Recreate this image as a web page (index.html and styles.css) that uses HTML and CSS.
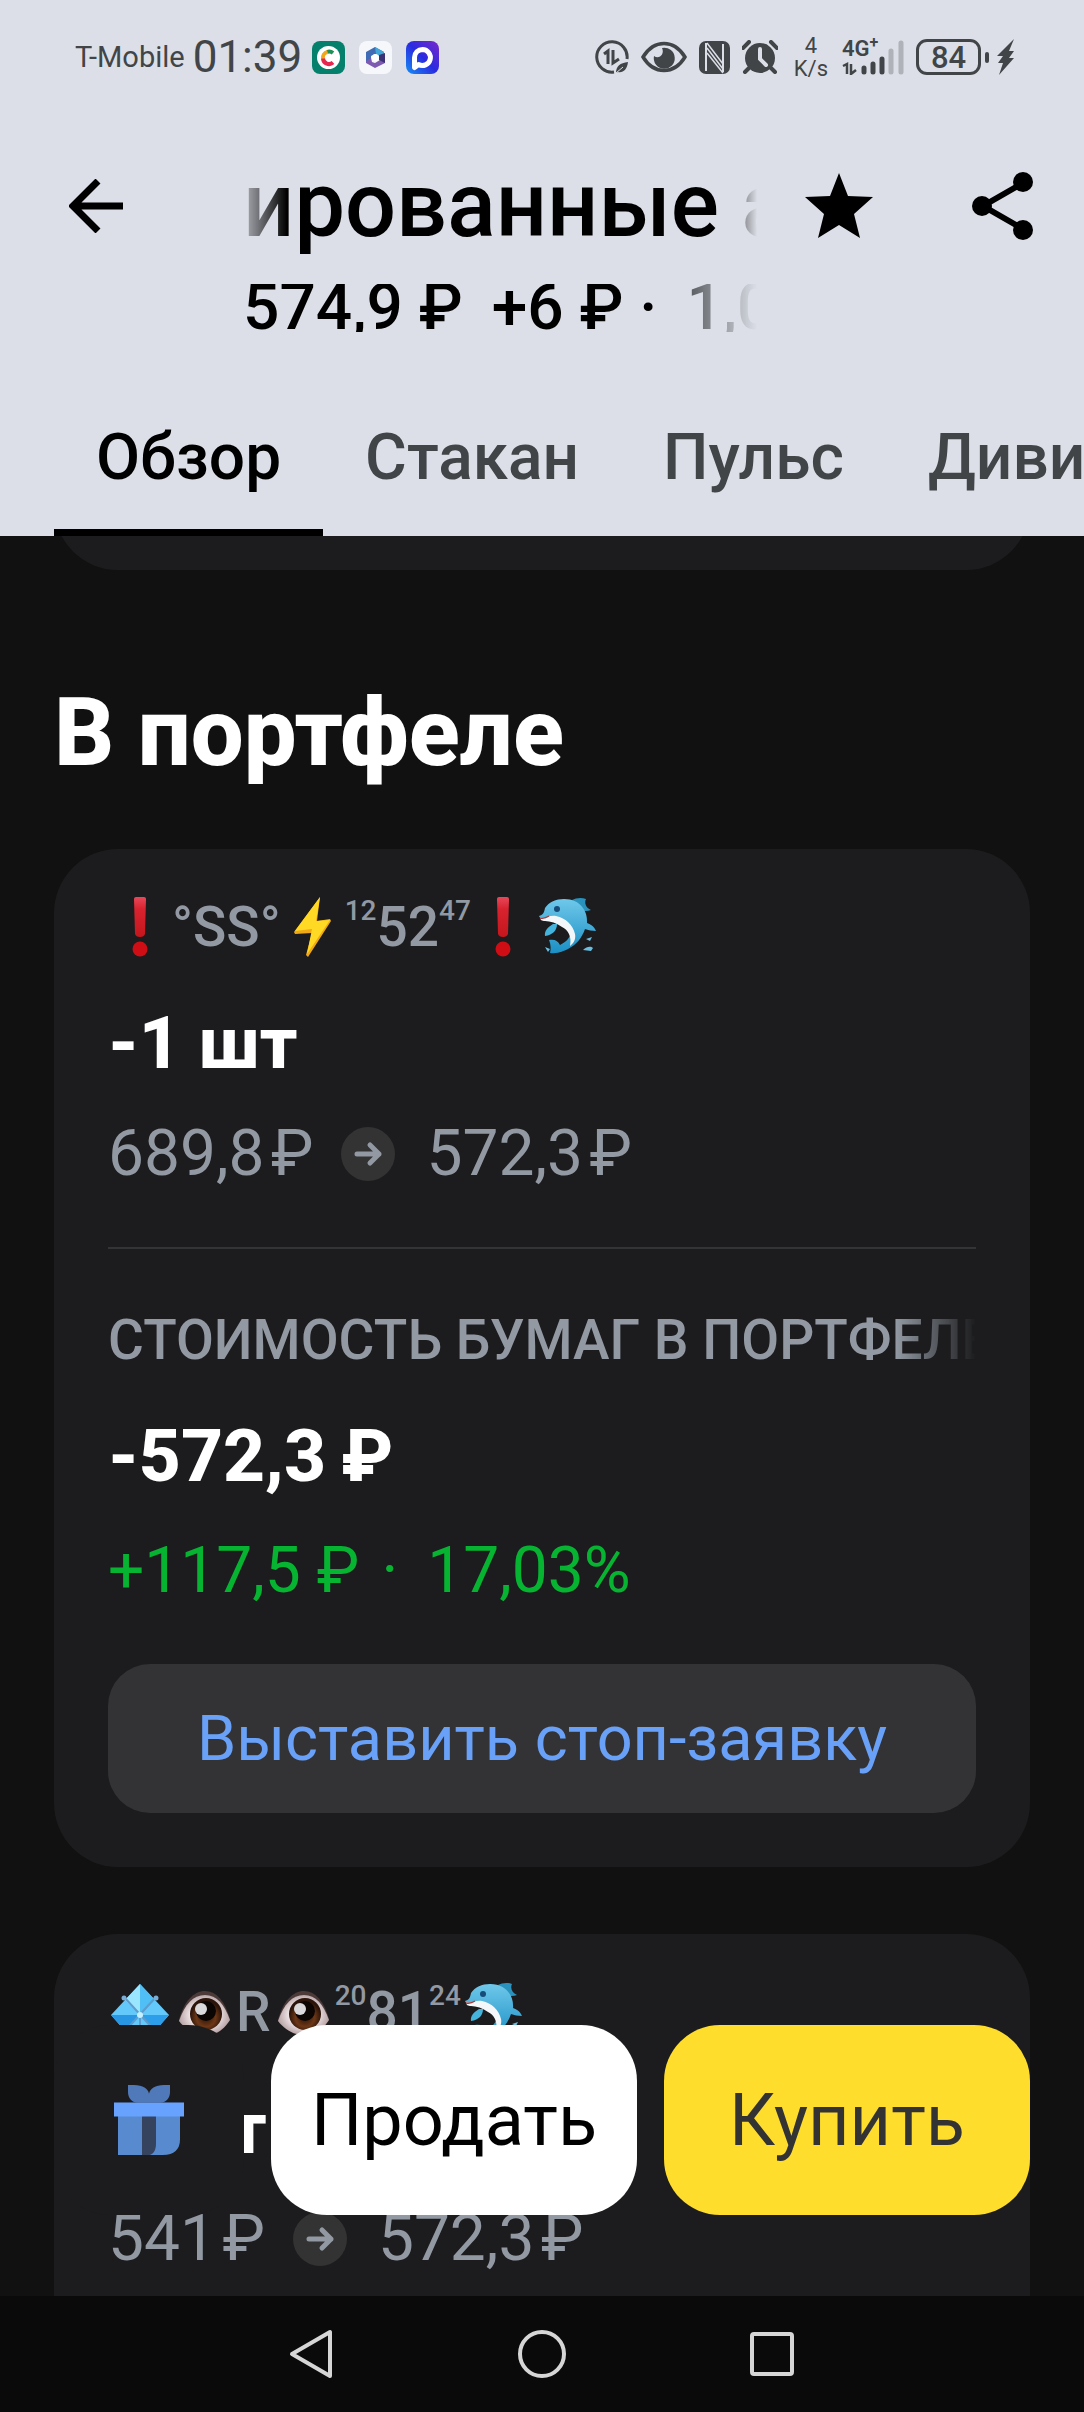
FILE: index.html
```html
<!DOCTYPE html>
<html lang="ru">
<head>
<meta charset="UTF-8">
<meta name="viewport" content="width=device-width, initial-scale=1.0">
<title>Обзор</title>
<link rel="stylesheet" href="styles.css">
</head>
<body>

<!-- Shared emoji drawings -->
<svg width="0" height="0" class="defs" aria-hidden="true">
  <defs>
    <linearGradient id="blue" x1="0" y1="0" x2="0" y2="1">
      <stop offset="0" stop-color="#6fc8ea"/>
      <stop offset="1" stop-color="#1b8fc4"/>
    </linearGradient>
    <linearGradient id="red" x1="0" y1="0" x2="0" y2="1">
      <stop offset="0" stop-color="#e8485a"/>
      <stop offset="0.3" stop-color="#d8232f"/>
      <stop offset="1" stop-color="#c4161c"/>
    </linearGradient>
    <linearGradient id="app" x1="0" y1="1" x2="1" y2="0">
      <stop offset="0" stop-color="#1590f5"/>
      <stop offset="0.5" stop-color="#2a2be0"/>
      <stop offset="1" stop-color="#7a28c8"/>
    </linearGradient>
    <radialGradient id="white-eye">
      <stop offset="0.5" stop-color="#f7eef0"/>
      <stop offset="1" stop-color="#b9a5a8"/>
    </radialGradient>
    <radialGradient id="iris" cx="0.5" cy="0.6" r="0.5">
      <stop offset="0" stop-color="#2a1208"/>
      <stop offset="0.6" stop-color="#6d3716"/>
      <stop offset="1" stop-color="#2b1409"/>
    </radialGradient>
    <symbol id="exclaim" viewBox="0 0 60 60">
      <path d="M24 2q0-2 2-2h8q2 0 2 2l-1 35q-1 3-5 3t-5-3z" fill="url(#red)"/>
      <circle cx="30" cy="52" r="7.5" fill="#cf0d14"/>
    </symbol>
    <symbol id="bolt" viewBox="0 0 60 60">
      <path d="M37 0L11 35l1 2 17-1-6 22 2 2 23-36-1-2-13 2z" fill="#f0a818"/>
      <path d="M37 0L12 34l17-2-5 25 23-34-14 1z" fill="#ffd923"/>
    </symbol>
    <symbol id="dolphin" viewBox="0 0 60 60">
      <path d="M35 3c4-2 9-3 14-1-2 4 0 9 5 11-5 2-12 1-16-3z" fill="#2a93bd"/>
      <path d="M2 19c4-1 5-3 6-8C12 5 19 2 27 2c17 0 24 13 23 24 3 1 7 3 9 8-4 0-8-1-11-2-3 9-9 16-17 20-5 2-9 5-18 4 1-4 1-8-1-13 6-1 9 1 11 5 6-3 10-7 11-13-4-8-12-13-23-13-4 0-8 0-9-3z" fill="url(#blue)"/>
      <path d="M3 20c5 2 9-2 16-1 10 2 17 9 19 18 1 5-1 9-5 12 2-10-2-16-8-19-5-4-12-6-17-6-3 0-5-1-5-4z" fill="#f4f7fa"/>
      <path d="M3 21c4 1 6 0 9-2" fill="none" stroke="#a63d3d" stroke-width="1.5"/>
      <path d="M20 27c0 6-4 11-12 12-1-5 3-9 8-12z" fill="#45b4dd"/>
      <circle cx="20" cy="12" r="3" fill="#174b78"/>
      <path d="M49 42l6-2-2 4zM46 53c4-4 8-4 10-2l-2 3zM8 50l5 2-2 3z" fill="#6cbede"/>
    </symbol>
    <symbol id="gem" viewBox="0 0 60 60">
      <path d="M30 2L45 18 59 33 45 49H15L1 33 15 18z" fill="#63c9fb"/>
      <path d="M30 2v31L15 18z" fill="#9be6ff"/>
      <path d="M30 2v31l15-15z" fill="#4fbff6"/>
      <path d="M1 33h29L15 49z" fill="#2996e4"/>
      <path d="M59 33H30l15 16z" fill="#2d9fea"/>
      <path d="M15 16l30 33M45 16L15 49M30 33v16" stroke="#5e9ccd" stroke-width="2" fill="none"/>
      <circle cx="14" cy="16" r="2.5" fill="#7aaed6"/><circle cx="46" cy="16" r="2.5" fill="#7aaed6"/>
      <circle cx="30" cy="33" r="3" fill="#c4f0ff"/>
    </symbol>
    <symbol id="eye" viewBox="0 0 60 60">
      <path d="M5 38C10 19 20 9 31 9s20 10 25 28C49 49 41 54 31 54S12 47 5 38z" fill="#4c3a38"/>
      <path d="M5 39C11 22 19 13 31 13s19 9 25 25C49 49 41 53 31 53S12 48 5 39z" fill="url(#white-eye)"/>
      <circle cx="32" cy="32" r="16" fill="url(#iris)"/>
      <circle cx="32" cy="29" r="10" fill="#0b0504"/>
      <circle cx="27" cy="27" r="6" fill="#d9d9dc"/>
    </symbol>
    <symbol id="go" viewBox="0 0 54 54">
      <circle cx="27" cy="27" r="27" fill="#333333"/>
      <path d="M16 27h22M29 18l9 9-9 9" fill="none" stroke="#9299a2" stroke-width="5" stroke-linecap="round" stroke-linejoin="round"/>
    </symbol>
  </defs>
</svg>

<div class="app">
  <header class="header">
    <div class="status">
      <span class="carrier">T-Mobile</span>
      <span class="clock">01:39</span>
      <div class="apps">
        <svg width="33" height="33" viewBox="0 0 33 33">
          <rect width="33" height="33" rx="8" fill="#04806c"/>
          <circle cx="16.500" cy="16.500" r="11.500" fill="#fff"/>
          <path d="M21 12a6 6 0 0 0-6-1" fill="none" stroke="#1d8f57" stroke-width="4"/>
          <path d="M15.500 11A6 6 0 0 0 11 18" fill="none" stroke="#f2a71b" stroke-width="4"/>
          <path d="M11 17.500a6 6 0 0 0 10 4" fill="none" stroke="#e5264f" stroke-width="4"/>
        </svg>
        <svg width="33" height="33" viewBox="0 0 33 33">
          <rect width="33" height="33" rx="8" fill="#f6f7fa"/>
          <path d="M16 6l9 5v6l-9-4-4 2v8l-5-3v-9z" fill="#3f6cb4"/>
          <path d="M16 6l9 5v6l-8-4z" fill="#41a6d8"/>
          <path d="M26 17v5l-10 5-9-5v-2l5-3 1 4 3 1 5-3z" fill="#7e5bb0"/>
          <path d="M26 12v10l-6-3v-5z" fill="#3b3275"/>
          <circle cx="16.500" cy="16.500" r="3.500" fill="#fff"/>
        </svg>
        <svg width="33" height="33" viewBox="0 0 33 33">
          <rect width="33" height="33" rx="8" fill="url(#app)"/>
          <path d="M16.500 8.500a8 8 0 1 1-4 15l-4 3V16.500a8 8 0 0 1 8-8z" fill="none" stroke="#fff" stroke-width="5" stroke-linejoin="round"/>
        </svg>
      </div>
      <div class="indicators">
        <svg width="34" height="34" viewBox="0 0 34 34" fill="none" stroke="#414548">
          <path d="M19 32A15.200 15.200 0 1 1 32 19" stroke-width="3"/>
          <path d="M9 14l4-3v13M18 10v13l6-4" stroke-width="3"/>
          <path d="M21 33c0-7 4-10 12-11-1 8-5 11-10 10z" fill="#414548" stroke="none"/>
          <path d="M21 33l7-6" stroke="#dcdfe7"/>
        </svg>
        <svg width="46" height="32" viewBox="0 0 46 32">
          <path d="M2 16C13-2 33-2 44 16 33 34 13 34 2 16z" fill="none" stroke="#414548" stroke-width="3.500"/>
          <path d="M21 7a10.500 10.500 0 1 1-8 8c5 4 11-2 8-8z" fill="#414548"/>
        </svg>
        <svg width="31" height="33" viewBox="0 0 31 33">
          <rect width="31" height="33" rx="7" fill="#414548"/>
          <path d="M7 2v28M24 3v28" stroke="#dcdfe7" stroke-width="2"/>
          <path d="M8 2l16 21M8 12l16 20M8 7l16 21" stroke="#dcdfe7" stroke-width="1.500"/>
        </svg>
        <svg width="36" height="34" viewBox="0 0 36 34">
          <circle cx="18" cy="18" r="15" fill="#414548"/>
          <path d="M1 8l6-6M35 8l-6-6M7 28l-4 4M29 28l4 4" stroke="#414548" stroke-width="4" stroke-linecap="round"/>
          <path d="M18 9v10l6 6" fill="none" stroke="#dcdfe7" stroke-width="4" stroke-linecap="round"/>
        </svg>
        <div class="speed"><span>4</span><span>K/s</span></div>
        <div class="signal">
          <span class="net">4G<sup>+</sup></span>
          <svg width="62" height="36" viewBox="0 0 62 36" stroke="#414548" fill="none">
            <path d="M1 27l4-2v10M9 25v10l5-4" stroke-width="2.500"/>
            <g stroke-width="5" stroke-linecap="round">
              <path d="M22 29v4M31 25v8M40 20v13"/>
              <path d="M49 12v21M59 4v29" stroke="#afb2b8"/>
            </g>
          </svg>
        </div>
        <div class="battery">84</div>
        <svg width="17" height="36" viewBox="0 0 17 36" fill="#414548">
          <path d="M17 0L0 17h6L1 24h5L2 36l15-17h-5l5-7h-5z"/>
        </svg>
      </div>
    </div>

    <div class="top-row">
      <button class="icon-button back" aria-label="Назад">
        <svg width="54" height="54" viewBox="0 0 54 54" fill="none" stroke="#000" stroke-width="7">
          <path d="M54 27H5M29 2L4 27l25 25"/>
        </svg>
      </button>
      <div class="titles">
        <h1 class="title">ированные акции</h1>
        <p class="quote">574,9 ₽&nbsp;&#8201;+6 ₽ ·&nbsp;&#8201;<span>1,05%</span></p>
      </div>
      <button class="icon-button star" aria-label="В избранное">
        <svg width="68" height="68" viewBox="0 0 68 68">
          <path d="M34 1l9 23 25 1-19 17 6 24-21-13-21 13 6-24L0 25l25-1z"/>
        </svg>
      </button>
      <button class="icon-button" aria-label="Поделиться">
        <svg width="61" height="68" viewBox="0 0 61 68">
          <path d="M51 11L11 34l40 23" fill="none" stroke="#000" stroke-width="6"/>
          <circle cx="51" cy="10" r="10"/><circle cx="10" cy="34" r="10"/><circle cx="51" cy="58" r="10"/>
        </svg>
      </button>
    </div>

    <nav class="tabs">
      <a href="#" class="tab active">Обзор</a>
      <a href="#" class="tab">Стакан</a>
      <a href="#" class="tab">Пульс</a>
      <a href="#" class="tab">Дивиденды</a>
    </nav>
  </header>

  <main class="content">
    <div class="card previous"></div>
    <h2 class="heading">В портфеле</h2>

    <section class="card">
      <div class="account">
        <svg class="emoji"><use href="#exclaim"/></svg>
        <span>°SS°</span>
        <svg class="emoji"><use href="#bolt"/></svg>
        <sup>12</sup><span>52</span><sup>47</sup>
        <svg class="emoji"><use href="#exclaim"/></svg>
        <svg class="emoji"><use href="#dolphin"/></svg>
      </div>
      <div class="amount">-1 шт</div>
      <div class="prices">
        <span>689,8&#8202;₽</span>
        <svg class="go"><use href="#go"/></svg>
        <span>572,3&#8202;₽</span>
      </div>
      <hr class="divider">
      <div class="label">СТОИМОСТЬ БУМАГ В ПОРТФЕЛЕ</div>
      <div class="amount">-572,3&#8201;₽</div>
      <div class="profit">+117,5 ₽&#8202; ·&nbsp;&#8201;17,03%</div>
      <button class="stop-button">Выставить стоп-заявку</button>
    </section>

    <section class="card">
      <div class="account">
        <svg class="emoji"><use href="#gem"/></svg>
        <svg class="emoji"><use href="#eye"/></svg>
        <span>R</span>
        <svg class="emoji"><use href="#eye"/></svg>
        <sup>20</sup><span>81</span><sup>24</sup>
        <svg class="emoji"><use href="#dolphin"/></svg>
      </div>
      <div class="amount">1 шт</div>
      <div class="prices">
        <span>541&#8202;₽</span>
        <svg class="go"><use href="#go"/></svg>
        <span>572,3&#8202;₽</span>
      </div>
      <hr class="divider">
    </section>

    <!-- Trade buttons float over the list -->
    <div class="actions">
      <button class="action gift" aria-label="Подарок">
        <svg width="70" height="70" viewBox="0 0 70 80" preserveAspectRatio="none">
          <path d="M14 0h6c9 0 14 4 15 10 1-6 6-10 15-10h6v8c0 7-4 12-9 12H23c-5 0-9-5-9-12z" fill="#5079b9"/>
          <path d="M4 35h62v27c0 12-6 18-17 18H4z" fill="#588acf"/>
          <path d="M28 35h14v32c0 8-3 12-7 13h-7z" fill="#35435f"/>
          <path d="M0 20h70v16H0z" fill="#67a2ff"/>
        </svg>
      </button>
      <button class="action sell">Продать</button>
      <button class="action buy">Купить</button>
    </div>
  </main>

  <footer class="system-nav">
    <button class="icon-button" aria-label="Назад">
      <svg width="50" height="50" viewBox="0 0 50 50"><path d="M43 3v44L5 25z"/></svg>
    </button>
    <button class="icon-button" aria-label="Домой">
      <svg width="50" height="50" viewBox="0 0 50 50"><circle cx="25" cy="25" r="22"/></svg>
    </button>
    <button class="icon-button" aria-label="Недавние">
      <svg width="50" height="50" viewBox="0 0 50 50"><rect x="5" y="5" width="40" height="40" rx="2"/></svg>
    </button>
  </footer>
</div>
</body>
</html>
```

FILE: styles.css
```css
* {
  box-sizing: border-box;
}

body {
  margin: 0;
  background-color: #111;
  color: #fff;
  font-family: Roboto, "Noto Sans", sans-serif;
}

h1, h2, p {
  margin: 0;
}

button {
  border: none;
  padding: 0;
  font-family: inherit;
  cursor: pointer;
}

svg {
  display: block;
  flex: none;
}

.defs {
  position: absolute;
}

.app {
  display: flex;
  flex-direction: column;
  height: 100vh;
  overflow: hidden;
}

/* Header */
.header {
  background-color: #dcdfe7;
  color: #000;
}

.status {
  display: flex;
  align-items: center;
  height: 114px;
  padding: 0 70px 0 75px;
  color: #414548;
}

.carrier {
  font-size: 29px;
}

.clock {
  margin-left: 8px;
  font-size: 44px;
}

.apps {
  display: flex;
  gap: 14px;
  margin-left: 10px;
}

.indicators {
  display: flex;
  align-items: center;
  gap: 12px;
  margin-left: auto;
}

.speed {
  display: flex;
  flex-direction: column;
  align-items: center;
  margin: 0 2px 0 4px;
  font-size: 22px;
  line-height: 23px;
}

.signal {
  position: relative;
}

.net {
  position: absolute;
  top: 0;
  left: 0;
  font-size: 22px;
  font-weight: 600;
  line-height: 20px;
}

.net sup {
  font-size: 16px;
  line-height: 0;
}

.battery {
  position: relative;
  width: 65px;
  height: 36px;
  margin-right: 4px;
  border: 3px solid #414548;
  border-radius: 11px;
  font-size: 31px;
  font-weight: 500;
  line-height: 31px;
  text-align: center;
}

.battery::after {
  content: "";
  position: absolute;
  top: 10px;
  right: -11px;
  width: 4px;
  height: 11px;
  border-radius: 2px;
  background-color: #414548;
}

.icon-button {
  background: none;
}

.top-row {
  display: flex;
  align-items: flex-start;
  padding: 40px 51px 44px 69px;
}

.top-row .icon-button {
  display: flex;
  align-items: center;
  height: 104px;
}

.titles {
  flex: 1;
  min-width: 0;
  margin: 0 48px 0 120px;
}

.title {
  overflow: hidden;
  font-size: 90px;
  font-weight: 500;
  line-height: 104px;
  white-space: nowrap;
  mask-image: linear-gradient(to right, rgba(0, 0, 0, 0.2), #000 44px, #000 calc(100% - 36px), transparent);
}

.quote {
  margin-top: 26px;
  overflow: hidden;
  font-size: 64px;
  font-weight: 500;
  line-height: 48px;
  white-space: nowrap;
  mask-image: linear-gradient(to right, #000 calc(100% - 80px), transparent);
}

.quote span {
  color: #414548;
}

.star {
  margin-right: 99px;
}

.tabs {
  display: flex;
  height: 160px;
  padding-left: 54px;
  overflow: hidden;
}

.tab {
  height: 160px;
  padding: 0 42px;
  border-bottom: 7px solid transparent;
  color: #414548;
  font-size: 64px;
  font-weight: 500;
  line-height: 164px;
  text-decoration: none;
}

.tab.active {
  border-color: #000;
  color: #000;
}

/* Content */
.content {
  position: relative;
  flex: 1;
  min-height: 0;
  padding: 0 54px;
  overflow: hidden;
}

.card {
  margin-bottom: 67px;
  padding: 36px 54px 54px;
  border-radius: 64px;
  background-color: #1c1c1e;
}

.card.previous {
  height: 134px;
  margin-top: -100px;
  margin-bottom: 111px;
}

.heading {
  margin-bottom: 64px;
  font-size: 94px;
  font-weight: 800;
  line-height: 104px;
}

.account {
  display: flex;
  align-items: center;
  height: 84px;
  color: #9299a2;
  font-size: 55px;
  font-weight: 500;
  white-space: nowrap;
}

.account sup {
  margin: 0 0 32px;
  font-size: 28px;
  line-height: 32px;
}

.emoji {
  width: 64px;
  height: 60px;
}

.amount {
  margin-top: 32px;
  font-size: 73px;
  font-weight: 800;
  line-height: 84px;
}

.prices {
  display: flex;
  align-items: center;
  margin-top: 27px;
  color: #9299a2;
  font-size: 64px;
  line-height: 84px;
}

.go {
  width: 54px;
  height: 54px;
  margin: 0 31px 0 28px;
}

.divider {
  height: 2px;
  margin: 51px 0 49px;
  border: none;
  background-color: #333436;
}

.label {
  overflow: hidden;
  color: #9299a2;
  font-size: 55px;
  font-weight: 500;
  line-height: 84px;
  white-space: nowrap;
  mask-image: linear-gradient(to right, #000 calc(100% - 80px), transparent);
}

.profit {
  margin-top: 31px;
  color: #06b432;
  font-size: 64px;
  line-height: 84px;
}

.stop-button {
  width: 100%;
  height: 149px;
  margin-top: 51px;
  border-radius: 42px;
  background-color: #333335;
  color: #69a1f8;
  font-size: 63px;
}

.actions {
  position: absolute;
  right: 54px;
  bottom: 81px;
  left: 54px;
  display: flex;
  gap: 27px;
}

.action {
  flex: 1;
  height: 190px;
  border-radius: 56px;
  font-size: 72px;
}

.gift {
  display: flex;
  align-items: center;
  justify-content: center;
  flex: none;
  width: 190px;
  background-color: #1c1c1e;
}

.sell {
  background-color: #fff;
  color: #000;
}

.buy {
  background-color: #ffdd2d;
  color: #333;
}

/* System navigation */
.system-nav {
  display: flex;
  align-items: center;
  justify-content: center;
  gap: 180px;
  height: 116px;
  background-color: #0a0a0a;
}

.system-nav svg {
  fill: none;
  stroke: #d6d6d6;
  stroke-width: 4;
  stroke-linejoin: round;
}
```
